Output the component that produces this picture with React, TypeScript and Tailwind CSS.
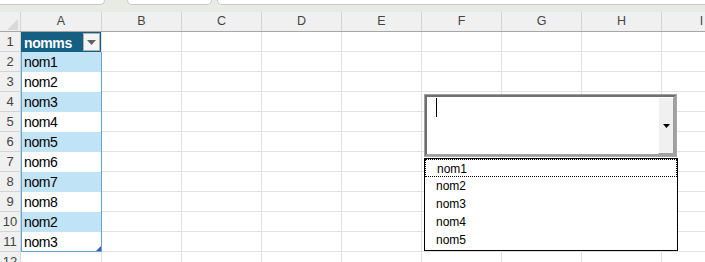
import React from 'react'

const COLS = ['B', 'C', 'D', 'E', 'F', 'G', 'H', 'I']
const NAMES = ['nom1', 'nom2', 'nom3', 'nom4', 'nom5', 'nom6', 'nom7', 'nom2', 'nom3']
const tableRows = ['nom1', 'nom2', 'nom3', 'nom4', 'nom5', 'nom6', 'nom7', 'nom8', 'nom2', 'nom3']
const listItems = ['nom1', 'nom2', 'nom3', 'nom4', 'nom5']

function EmptyCells() {
  return (
    <>
      {COLS.map(c => (
        <div key={c} className="w-[80px] shrink-0 h-full border-r border-b border-[#e1e1e1] bg-white" />
      ))}
    </>
  )
}

function RowHead({ n }: { n: number }) {
  return (
    <div className="w-[21px] shrink-0 h-full border-b border-r border-[#d4d4d4] bg-[#f0f0f0] text-[13px] text-[#444] text-center leading-[20px]">
      {n}
    </div>
  )
}

export default function App() {
  void NAMES
  return (
    <div className="w-[705px] h-[262px] overflow-hidden relative bg-white" style={{ fontFamily: '"Liberation Sans", Arial, sans-serif' }}>
      {/* tab strip */}
      <div className="h-[12px] bg-[#e8ebe4] flex items-start">
        <div className="w-[105px] h-[5px] bg-white border-b border-r border-[#c9c9c9] rounded-br-[5px] shrink-0" />
        <div className="ml-[22px] w-[85px] h-[5px] bg-white border-b border-x border-[#c9c9c9] rounded-b-[5px] shrink-0" />
        <div className="ml-[5px] w-[520px] h-[5px] bg-white border-b border-l border-[#c9c9c9] rounded-bl-[5px] shrink-0" />
      </div>

      {/* column headers */}
      <div className="flex h-[20px] bg-[#f0f0f0] border-b border-[#a6a6a6]">
        <div className="w-[21px] shrink-0 h-full border-r border-[#d4d4d4] relative">
          <svg width="21" height="19" className="absolute left-0 top-0">
            <polygon points="7,18 18,18 18,7" fill="#d9d9d9" />
          </svg>
        </div>
        <div className="w-[81px] shrink-0 h-full border-r border-[#d4d4d4] text-center text-[12.5px] text-[#444] leading-[19px]">A</div>
        {COLS.map(c => (
          <div key={c} className="w-[80px] shrink-0 h-full border-r border-[#d4d4d4] text-center text-[12.5px] text-[#444] leading-[19px]">
            {c}
          </div>
        ))}
      </div>

      {/* row 1 - table header */}
      <div className="flex h-[20px]">
        <RowHead n={1} />
        <div className="w-[81px] shrink-0 h-full border-r border-[#e1e1e1] bg-[#156082] flex items-center pl-[3px] pr-[1px]">
          <span className="flex-1 text-white font-bold text-[14px] tracking-[-0.4px] leading-[20px] pt-[1px]">nomms</span>
          <div className="w-[17px] h-[18px] bg-[#f4f4f4] border border-[#b0b0b0] flex items-center justify-center">
            <svg width="9" height="5"><polygon points="0,0 9,0 4.5,5" fill="#606060" /></svg>
          </div>
        </div>
        <EmptyCells />
      </div>

      {/* table body */}
      {tableRows.map((name, i) => {
        const last = i === tableRows.length - 1
        return (
          <div key={i} className="flex h-[20px]">
            <RowHead n={i + 2} />
            <div
              className={`w-[81px] shrink-0 h-full border-x border-x-[#5ea7d9] ${i % 2 === 0 ? 'bg-[#c0e4f5]' : 'bg-white'} ${last ? 'border-b border-b-[#5ea7d9]' : ''} relative pl-[2px] text-[14px] tracking-[-0.4px] leading-[20px] text-black`}
            >
              {name}
              {last && (
                <svg width="5" height="5" className="absolute right-0 bottom-0">
                  <polygon points="0,5 5,5 5,0" fill="#4b52b8" />
                </svg>
              )}
            </div>
            <EmptyCells />
          </div>
        )
      })}

      {/* row 12 */}
      <div className="flex h-[20px]">
        <RowHead n={12} />
        <div className="w-[81px] shrink-0 h-full border-r border-b border-[#e1e1e1]" />
        <EmptyCells />
      </div>

      {/* combo box control */}
      <div className="absolute left-[424px] top-[94px] w-[253px] h-[63px] border border-t-[#a0a0a0] border-l-[#a0a0a0] border-r-[#a8a8a8] border-b-[#a8a8a8]">
        <div className="w-full h-full border-2 border-t-[#6f6f6f] border-l-[#6f6f6f] border-r-[#a0a0a0] border-b-[#a0a0a0] bg-white flex">
          <div className="flex-1 relative">
            <div className="absolute left-[9px] top-[1px] w-px h-[19px] bg-black" />
          </div>
          <div className="w-[16px] h-full bg-[#f0f0f0] border border-t-white border-l-white border-r-[#a0a0a0] border-b-[#a0a0a0] flex items-center justify-center">
            <svg width="7" height="4"><polygon points="0,0 7,0 3.5,4" fill="#000" /></svg>
          </div>
        </div>
      </div>

      {/* dropdown list */}
      <div className="absolute left-[424px] top-[158px] w-[254px] h-[93px] border border-black bg-white">
        {listItems.map((item, i) => (
          <div
            key={item}
            className={`h-[18px] pl-[11px] text-[12px] leading-[18px] text-black ${i === 0 ? 'border border-dotted border-black pl-[10px] leading-[16px]' : ''}`}
          >
            {item}
          </div>
        ))}
      </div>
    </div>
  )
}
